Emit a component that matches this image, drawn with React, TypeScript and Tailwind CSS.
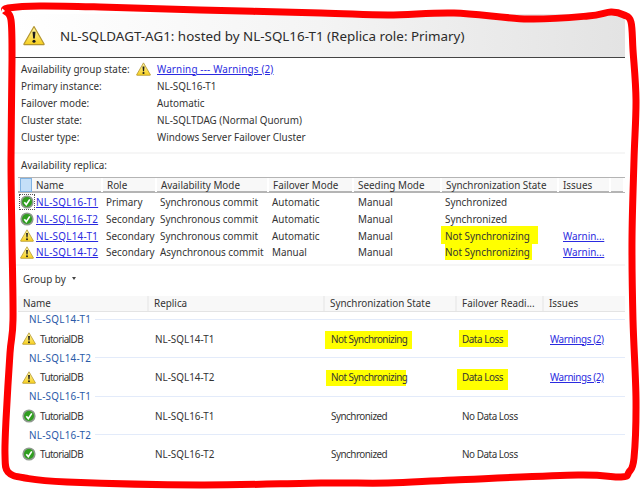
const font = { fontFamily: '"Noto Sans", Roboto, Arial, sans-serif' };

// hand drawn outline, traced from the picture
const outline: [number, number][] = [
  [5, 11], [8, 8], [40, 6], [100, 7], [200, 10], [321, 13], [388, 15], [454, 13], [528, 19], [588, 16],
  [611, 12], [624, 15], [631, 22], [633, 50], [636, 100], [634, 160], [632, 240], [633, 320], [636, 400],
  [634, 458], [629, 472], [621, 477], [578, 475], [454, 480], [388, 483], [321, 483], [200, 485], [67, 482],
  [25, 478], [8, 472], [5, 455], [6, 420], [10, 353], [13, 320], [12, 240], [11, 160], [12, 60], [11, 20], [5, 11],
];

function smooth(pts: [number, number][]) {
  let d = `M${pts[0][0]} ${pts[0][1]}`;
  for (let i = 0; i < pts.length - 1; i++) {
    const p0 = pts[Math.max(i - 1, 0)];
    const p1 = pts[i];
    const p2 = pts[i + 1];
    const p3 = pts[Math.min(i + 2, pts.length - 1)];
    d += ` C${p1[0] + (p2[0] - p0[0]) / 6} ${p1[1] + (p2[1] - p0[1]) / 6} ${p2[0] - (p3[0] - p1[0]) / 6} ${p2[1] - (p3[1] - p1[1]) / 6} ${p2[0]} ${p2[1]}`;
  }
  return d;
}

function WarnIcon({ className }: { className: string }) {
  return (
    <svg viewBox="0 0 24 22" className={className}>
      <defs>
        <linearGradient id="warn" x1="0" y1="0" x2="0" y2="1">
          <stop offset="0" stopColor="#fff7a8" />
          <stop offset="1" stopColor="#f7cf1e" />
        </linearGradient>
      </defs>
      <path d="M12 1.2 L23 20.2 Q23.2 21 22.2 21 L1.8 21 Q.8 21 1 20.2 Z" fill="url(#warn)" stroke="#b3952f" strokeWidth="1.3" strokeLinejoin="round" />
      <path d="M10.4 6.8 L13.6 6.8 L12.9 14.4 L11.1 14.4 Z" fill="#1c1c1c" />
      <circle cx="12" cy="17.3" r="1.7" fill="#1c1c1c" />
    </svg>
  );
}

function OkIcon({ className }: { className: string }) {
  return (
    <svg viewBox="0 0 14 14" className={className}>
      <circle cx="7" cy="7" r="6.6" fill="#8f9a8f" />
      <circle cx="7" cy="7" r="5" fill="#2f9e1f" />
      <path d="M4.3 7.2 L6.3 9.6 L9.8 4.4" fill="none" stroke="#fff" strokeWidth="1.7" />
    </svg>
  );
}

function Mark({ box, children }: { box: string; children: string }) {
  return (
    <span className="relative inline-block">
      <span className={`absolute bg-[#ffff00] ${box}`} />
      <span className="relative">{children}</span>
    </span>
  );
}

function Link({ children, className = '' }: { children: string; className?: string }) {
  return <span className={`text-[#2a2ae0] underline ${className}`}>{children}</span>;
}

const info = [
  ['Primary instance:', 'NL-SQL16-T1'],
  ['Failover mode:', 'Automatic'],
  ['Cluster state:', 'NL-SQLTDAG (Normal Quorum)'],
  ['Cluster type:', 'Windows Server Failover Cluster'],
];

const replicaHead = ['Name', 'Role', 'Availability Mode', 'Failover Mode', 'Seeding Mode', 'Synchronization State', 'Issues', ''];

const replicas = [
  { name: 'NL-SQL16-T1', ok: true, role: 'Primary', mode: 'Synchronous commit', failover: 'Automatic', sync: 'Synchronized' },
  { name: 'NL-SQL16-T2', ok: true, role: 'Secondary', mode: 'Synchronous commit', failover: 'Automatic', sync: 'Synchronized' },
  { name: 'NL-SQL14-T1', ok: false, role: 'Secondary', mode: 'Synchronous commit', failover: 'Automatic', box: 'left-[-4px] w-[97px] top-[-3px] bottom-[-1px]' },
  { name: 'NL-SQL14-T2', ok: false, role: 'Secondary', mode: 'Asynchronous commit', failover: 'Manual', box: 'left-0 w-[87px] top-[-1px] bottom-[-1px]' },
];

const groups = [
  { name: 'NL-SQL14-T1', ok: false, syncBox: 'left-[-6px] w-[87px] top-[-1px] bottom-[-3px]', lossBox: 'left-[-3px] w-[49px] top-[-2px] bottom-[-1px]' },
  { name: 'NL-SQL14-T2', ok: false, syncBox: 'left-[-5px] w-[80px] top-[0px] bottom-[-2px]', lossBox: 'left-[-5px] w-[51px] top-[-1px] bottom-[-6px]' },
  { name: 'NL-SQL16-T1', ok: true },
  { name: 'NL-SQL16-T2', ok: true },
];

export default function App() {
  return (
    <div className="relative w-[642px] h-[490px] overflow-hidden bg-white pt-[14px] pl-[14px] text-[9.9px] leading-[14px] text-[#333]" style={font}>
      <div className="w-[611px]">
        <div className="flex h-[44px] items-center gap-[15px] border-b border-[#444] bg-gradient-to-r from-white via-[#f4f4f4] to-[#e3e3e3] pl-[9px]">
          <WarnIcon className="w-[22px] h-[21px]" />
          <span className="text-[13.4px] whitespace-nowrap text-[#2b2b2b]">NL-SQLDAGT-AG1: hosted by NL-SQL16-T1 (Replica role: Primary)</span>
        </div>

        <div className="pt-[2px] pl-[7px]">
          <div className="flex h-[17px] items-center">
            <span className="w-[115px]">Availability group state:</span>
            <WarnIcon className="w-[15px] h-[14px] mr-[6px]" />
            <Link className="tracking-[0.17px]">Warning --- Warnings (2)</Link>
          </div>
          {info.map(([label, value]) => (
            <div key={label} className="flex h-[17px] items-center">
              <span className="w-[136px]">{label}</span>
              <span>{value}</span>
            </div>
          ))}
        </div>

        <div className="mt-[7px] h-[2px] bg-[#f6f6f6]" />
        <div className="pl-[7px] mt-[3px] h-[16px] flex items-center">Availability replica:</div>

        <div className="mt-[4px] ml-[4px] grid h-[16px] grid-cols-[14px_71px_54px_112px_85px_88px_117px_52px_14px] border-y border-y-[#b4b4b4] border-b-2 bg-[#f8f8f8] items-stretch">
          <div className="ml-[2px] bg-[#c4dff8] border border-[#7fb2e2]" />
          {replicaHead.map((h, i) => (
            <div key={i} className="flex items-center border-r-2 border-white pl-[4px] whitespace-nowrap">{h}</div>
          ))}
        </div>

        <div className="ml-[6px] pt-[1px]">
          {replicas.map((r, i) => (
            <div key={r.name} className="grid h-[16.7px] grid-cols-[12px_71px_54px_112px_85px_88px_117px_52px] items-center whitespace-nowrap">
              <div className={`flex h-[14px] w-[14px] items-center justify-center ${i === 0 ? 'outline outline-1 outline-dotted outline-[#555]' : ''}`}>
                {r.ok ? <OkIcon className="w-[14px] h-[14px] shrink-0" /> : <WarnIcon className="w-[14px] h-[13px] shrink-0" />}
              </div>
              <div className="pl-[4px]"><Link className="tracking-[0.25px]">{r.name}</Link></div>
              <div className="pl-[3px]">{r.role}</div>
              <div className="pl-[3px]">{r.mode}</div>
              <div className="pl-[3px]">{r.failover}</div>
              <div className="pl-[4px]">Manual</div>
              <div className="pl-[3px]">{r.box ? <Mark box={r.box}>Not Synchronizing</Mark> : r.sync}</div>
              <div className="pl-[4px]">{r.box ? <Link>Warnin...</Link> : null}</div>
            </div>
          ))}
        </div>

        <div className="mt-[3px] h-[2px] bg-[#f6f6f6]" />
        <div className="pl-[9px] mt-[5px] h-[16px] flex items-center gap-[6px]">
          Group by
          <span className="border-x-[2.5px] border-t-[3px] border-x-transparent border-t-[#444]" />
        </div>

        <div className="mt-[9px] mb-[-2px] ml-[4px] grid h-[16px] grid-cols-[131px_176px_132px_87px_71px] border-b border-[#e4e4e4] bg-[#f8f8f8]">
          {['Name', 'Replica', 'Synchronization State', 'Failover Readi...', 'Issues'].map((h) => (
            <div key={h} className="flex items-center border-r-2 border-[#eeeeee] pl-[5px] whitespace-nowrap last:border-r-0">{h}</div>
          ))}
        </div>

        {groups.map((g) => (
          <div key={g.name} className="ml-[4px]">
            <div className="flex h-[19px] items-center pl-[11px] text-[#2a5aa8] whitespace-nowrap">
              <span className="w-[66px] shrink-0 tracking-[0.25px]">{g.name}</span>
              <span className="h-px flex-1 bg-[#e3ebfa]" />
            </div>
            <div className="grid h-[19.5px] grid-cols-[131px_176px_132px_87px_71px] items-center whitespace-nowrap">
              <div className="flex items-center gap-[4px] pl-[4px] tracking-[-0.6px]">
                {g.ok ? <OkIcon className="w-[14px] h-[14px]" /> : <WarnIcon className="w-[14px] h-[13px]" />}
                TutorialDB
              </div>
              <div className="pl-[6px]">{g.name}</div>
              <div className="pl-[6px] tracking-[-0.5px]">{g.syncBox ? <Mark box={g.syncBox}>Not Synchronizing</Mark> : 'Synchronized'}</div>
              <div className="pl-[5px] tracking-[-0.45px]">{g.lossBox ? <Mark box={g.lossBox}>Data Loss</Mark> : 'No Data Loss'}</div>
              <div className="pl-[6px] tracking-[-0.4px]">{g.ok ? null : <Link>Warnings (2)</Link>}</div>
            </div>
          </div>
        ))}
      </div>

      <svg width="642" height="490" className="absolute left-0 top-0 pointer-events-none">
        <path d={smooth(outline)} fill="none" stroke="#ff0000" strokeWidth="7" strokeLinejoin="round" />
      </svg>
    </div>
  );
}
